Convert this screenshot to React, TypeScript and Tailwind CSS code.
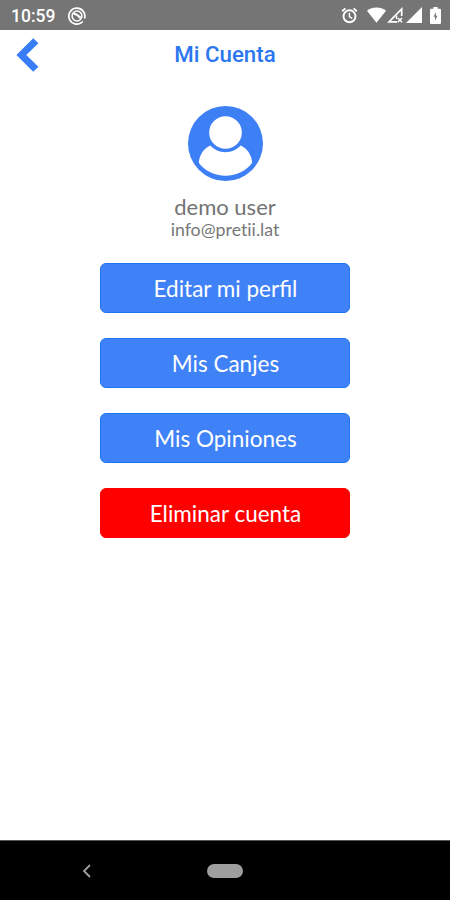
import React from 'react';
import { clsx } from 'clsx';

interface ActionButtonProps {
  label: string;
  variant?: 'primary' | 'danger';
}

function ActionButton({ label, variant = 'primary' }: ActionButtonProps) {
  return (
    <button
      type="button"
      className={clsx(
        'flex h-[50px] w-[250px] items-center justify-center rounded-md border pt-[2px] pl-px text-[22.5px] leading-[28px] text-white',
        variant === 'primary' ? 'border-[#1f75f0] bg-[#3f82f8]' : 'border-[#ff0000] bg-[#ff0000]',
      )}
    >
      {label}
    </button>
  );
}

function StatusBar() {
  return (
    <div className="flex h-[30px] shrink-0 items-center bg-[#757575] pr-[9px] pl-[11px] text-white">
      <span className="pt-[3px] font-['Roboto',sans-serif] text-[17.5px] leading-none font-medium">10:59</span>
      <svg className="mt-px ml-[13px] h-[18px] w-[18px]" viewBox="0 0 18 18" fill="none" stroke="currentColor">
        <path d="M14.8 14.5A8 8 0 1 1 16.5 11.5" strokeWidth="1.7" />
        <circle cx="9" cy="9" r="4.9" strokeWidth="1.5" />
        <path d="M5.5 7c2.5-.8 4.5 1.5 7 4" strokeWidth="2.4" />
      </svg>
      <div className="ml-auto flex items-center">
        <svg className="h-[17px] w-[17px]" viewBox="0 0 17 17" fill="none" stroke="currentColor">
          <circle cx="8.5" cy="9.3" r="6" strokeWidth="1.9" />
          <path d="M1.2 4.2l3.2-2.8M15.8 4.2l-3.2-2.8" strokeWidth="1.9" />
          <path d="M8.4 5.8v3.8l2.8 1.7" strokeWidth="1.5" />
        </svg>
        <svg className="ml-[9px] h-[16px] w-[19px]" viewBox="0 0 19 16" fill="currentColor">
          <path d="M0 3.7C5.6-.6 13.4-.6 19 3.7L9.5 15.8z" />
        </svg>
        <svg className="ml-px h-[16px] w-[16px]" viewBox="0 0 16 16" fill="none" stroke="currentColor">
          <path d="M14.7 9V2L2 14.9H10" strokeWidth="1.7" />
          <path d="M10.8 11l4.3 4.3M15 11l-4.3 4.3" strokeWidth="1.5" />
          <path d="M9.5 8.5v3.5" strokeWidth="1.5" />
        </svg>
        <svg className="ml-[3px] h-[16px] w-[16px]" viewBox="0 0 16 16" fill="currentColor">
          <path d="M16 0v16H0z" />
        </svg>
        <svg className="ml-[8px] h-[17px] w-[11px]" viewBox="0 0 11 17">
          <path fill="currentColor" d="M3.4 0h4.2v1.7h2.1c.7 0 1.3.5 1.3 1.2v12.8c0 .7-.6 1.3-1.3 1.3H1.3C.6 17 0 16.4 0 15.7V2.9c0-.7.6-1.2 1.3-1.2h2.1z" />
          <path fill="#757575" d="M5.9 5L3.6 9.7H5v4l2.4-4.9H5.9z" />
        </svg>
      </div>
    </div>
  );
}

function Header() {
  return (
    <header className="grid h-[50px] shrink-0 grid-cols-[1fr_auto_1fr] items-center px-4">
      <button type="button" aria-label="Volver" className="w-fit text-[#397df6]">
        <svg className="h-[34px] w-[23px]" viewBox="0 0 23 34" fill="currentColor">
          <path d="M17.2 .2l5.2 5.1L10.3 17l12.1 11.7-5.2 5.1L.4 17z" />
        </svg>
      </button>
      <h1 className="pb-[2px] font-['Roboto',sans-serif] text-[22.3px] leading-none font-medium text-[#2c76ef]">Mi Cuenta</h1>
    </header>
  );
}

function Avatar() {
  return (
    <svg className="h-[76px] w-[76px]" viewBox="0 0 76 76">
      <circle cx="38.5" cy="37.5" r="37.5" fill="#3d80f6" />
      <circle cx="38.5" cy="26.5" r="16.3" fill="white" />
      <path
        fill="white"
        d="M23.3 39.5c4 4.3 9.3 6.7 15.2 6.7s11.2-2.4 15.2-6.7c6.3 2.8 10.8 9 11.5 17.3C59.2 65 49.3 69.8 38.5 69.8S17.8 65 11.8 56.8C12.5 48.5 17 42.3 23.3 39.5z"
      />
    </svg>
  );
}

function NavigationBar() {
  return (
    <nav className="grid h-[60px] shrink-0 grid-cols-[1fr_auto_1fr] items-center border-t border-[#555555] bg-black">
      <svg className="ml-[82px] h-[14px] w-[9px]" viewBox="0 0 9 14" fill="none" stroke="#a0a0a0" strokeWidth="1.8">
        <path d="M8 1L2 7l6 6" />
      </svg>
      <div className="h-[14px] w-[36px] rounded-full bg-[#9e9e9e]" />
    </nav>
  );
}

export default function App() {
  return (
    <div className="flex h-[900px] w-[450px] flex-col bg-white font-['Lato',sans-serif]">
      <StatusBar />
      <Header />
      <main className="flex flex-1 flex-col items-center pt-[26px]">
        <Avatar />
        <p className="mt-[12px] text-[22px] leading-[26px] text-[#737373]">demo user</p>
        <p className="text-[17.8px] leading-[18px] text-[#777777] [font-variant-ligatures:none]">info@pretii.lat</p>
        <div className="mt-[25px] flex flex-col gap-[25px]">
          <ActionButton label="Editar mi perfil" />
          <ActionButton label="Mis Canjes" />
          <ActionButton label="Mis Opiniones" />
          <ActionButton label="Eliminar cuenta" variant="danger" />
        </div>
      </main>
      <NavigationBar />
    </div>
  );
}
